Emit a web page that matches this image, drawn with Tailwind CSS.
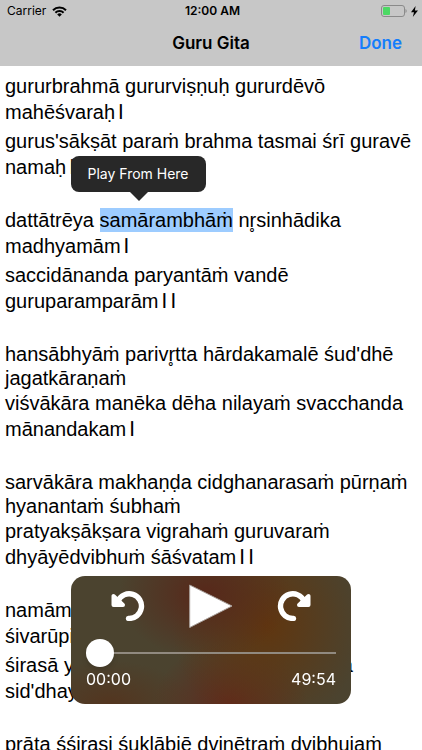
<!DOCTYPE html>
<html lang="en">
<head>
  <meta charset="UTF-8">
  <meta name="viewport" content="width=device-width, initial-scale=1.0">
  <title>Guru Gita</title>
  <script src="https://cdn.jsdelivr.net/npm/@tailwindcss/browser@4"></script>
</head>
<body class="h-screen flex flex-col overflow-hidden bg-white text-black font-['Inter','Noto_Sans',sans-serif]">
  <header class="bg-[#c7c7c7]">
    <!-- Status bar -->
    <div class="grid grid-cols-3 items-center h-[22px] pl-[7px] pr-1 text-xs">
      <div class="flex items-center gap-1.5">
        <span>Carrier</span>
        <svg class="w-[15px] h-[11px]" viewBox="0 0 15 11" fill="none" stroke="#000" stroke-width="2">
          <path d="M1 4.2a9.2 9.2 0 0 1 13 0"/>
          <path d="M3.4 6.7a5.8 5.8 0 0 1 8.2 0"/>
          <path d="M5.2 8.4a3.3 3.3 0 0 1 4.6 0L7.5 10.8z" fill="#000" stroke="none"/>
        </svg>
      </div>
      <span class="text-center font-semibold whitespace-nowrap">12:00 AM</span>
      <div class="flex items-center justify-end gap-1">
        <svg class="w-[26px] h-3" viewBox="0 0 26 12">
          <rect x="0.5" y="0.5" width="23" height="11" rx="2.5" fill="none" stroke="#8a8a8a"/>
          <rect x="2" y="2" width="7" height="8" rx="1" fill="#4cd964"/>
          <path d="M24.5 4v4q1.2-.6 1.2-2t-1.2-2z" fill="#8a8a8a"/>
        </svg>
        <svg class="w-[7px] h-[11px]" viewBox="0 0 7 11"><path d="M4.600 0L0 6.200h3L1.800 11 7 4.600H3.900z"/></svg>
      </div>
    </div>
    <!-- Navigation bar -->
    <div class="grid grid-cols-3 items-center h-11 px-5">
      <h1 class="col-start-2 text-center text-[17px] font-semibold whitespace-nowrap">Guru Gita</h1>
      <button type="button" class="justify-self-end text-[17px] font-semibold text-[#157efb]">Done</button>
    </div>
  </header>

  <main class="relative flex-1 min-h-0 overflow-hidden pt-2 px-[5px] text-xl/6 whitespace-nowrap font-['Liberation_Sans','Noto_Sans',sans-serif]">
    <div class="flex flex-col gap-px mb-[25px]">
      <p>gururbrahmā gururviṣṇuḥ gururdēvō <span class="block pt-0.5 pb-1">mahēśvaraḥ<span class="text-2xl/3">।</span></span></p>
      <p>gurus'sākṣāt paraṁ brahma tasmai śrī guravē <span class="block pt-0.5 pb-1">namaḥ<span class="text-2xl/3">।।</span></span></p>
    </div>
    <div class="flex flex-col gap-px mb-[25px]">
      <p>dattātrēya <span class="relative inline-block bg-[#9dccff]">samārambhāṁ<button type="button" class="absolute bottom-full -left-[29px] mb-4 w-[135px] h-9 rounded-lg bg-[#282828] font-['Inter'] text-sm text-white">Play From Here<svg class="absolute top-full left-[59px] w-[18px] h-[9px]" viewBox="0 0 18 9" fill="#282828"><path d="M0 0h18L9 9z"/></svg></button></span> nr̥sinhādika <span class="block pt-0.5 pb-1">madhyamām<span class="text-2xl/3">।</span></span></p>
      <p>saccidānanda paryantāṁ vandē <span class="block pt-0.5 pb-1">guruparamparām<span class="text-2xl/3">।।</span></span></p>
    </div>
    <div class="flex flex-col gap-px mb-[25px]">
      <p>hansābhyāṁ parivr̥tta hārdakamalē śud'dhē <span class="block">jagatkāraṇaṁ</span></p>
      <p>viśvākāra manēka dēha nilayaṁ svacchanda <span class="block pt-0.5 pb-1">mānandakam<span class="text-2xl/3">।</span></span></p>
    </div>
    <div class="flex flex-col gap-px mb-[25px]">
      <p>sarvākāra makhaṇḍa cidghanarasaṁ pūrṇaṁ <span class="block">hyanantaṁ śubhaṁ</span></p>
      <p>pratyakṣākṣara vigrahaṁ guruvaraṁ <span class="block pt-0.5 pb-1">dhyāyēdvibhuṁ śāśvatam<span class="text-2xl/3">।।</span></span></p>
    </div>
    <div class="flex flex-col gap-px mb-[25px]">
      <p>namāmi sadguruṁ śāntaṁ satyaṁ <span class="block pt-0.5 pb-1">śivarūpiṇam<span class="text-2xl/3">।</span></span></p>
      <p>śirasā yōgapīṭhasthaṁ muktikāmyārtha <span class="block pt-0.5 pb-1">sid'dhayē<span class="text-2xl/3">।।</span></span></p>
    </div>
    <p>prāta śśirasi śuklābjē dvinētraṁ dvibhujaṁ</p>
  </main>

  <!-- Player -->
  <section aria-label="Player" class="fixed bottom-[46px] left-1/2 -translate-x-1/2 w-70 h-32 px-[15px] pt-2 rounded-[14px] overflow-hidden text-white bg-[#4b432f] bg-[radial-gradient(ellipse_at_48%_14%,#57281a_0%,transparent_42%),radial-gradient(ellipse_40%_100%_at_70%_38%,#60360f_0%,transparent_85%),radial-gradient(ellipse_at_57%_100%,#60291c_0%,transparent_34%),radial-gradient(ellipse_at_14%_100%,#53351f_0%,transparent_24%)]">
    <div class="flex items-center justify-between px-6">
      <button type="button" aria-label="Rewind">
        <svg class="w-9 h-[30px]" viewBox="0 0 36 30" fill="none" stroke="#fff" stroke-linecap="round" stroke-linejoin="round">
          <path d="M8 10A12.300 12.300 0 1 1 18.500 27.400" stroke-width="5.400"/>
          <path d="M3.500 5v9h9.500z" fill="#fff" stroke-width="4"/>
        </svg>
      </button>
      <button type="button" aria-label="Play">
        <svg class="w-11 h-11" viewBox="0 0 44 44"><path d="M.7 1v42.500L43 22z" fill="#fff" stroke="#a9a19c" stroke-width="1"/></svg>
      </button>
      <button type="button" aria-label="Forward">
        <svg class="w-9 h-[30px] -scale-x-100" viewBox="0 0 36 30" fill="none" stroke="#fff" stroke-linecap="round" stroke-linejoin="round">
          <path d="M8 10A12.300 12.300 0 1 1 18.500 27.400" stroke-width="5.400"/>
          <path d="M3.500 5v9h9.500z" fill="#fff" stroke-width="4"/>
        </svg>
      </button>
    </div>
    <input type="range" min="0" max="2994" value="0" aria-label="Position" class="block mt-[11px] w-full h-7 appearance-none bg-transparent bg-[linear-gradient(#918a80,#918a80)] bg-[length:100%_2px] bg-center bg-no-repeat [&::-webkit-slider-thumb]:appearance-none [&::-webkit-slider-thumb]:size-7 [&::-webkit-slider-thumb]:rounded-full [&::-webkit-slider-thumb]:bg-white [&::-webkit-slider-thumb]:shadow-md">
    <div class="flex justify-between text-base/6">
      <span>00:00</span>
      <span>49:54</span>
    </div>
  </section>
</body>
</html>
